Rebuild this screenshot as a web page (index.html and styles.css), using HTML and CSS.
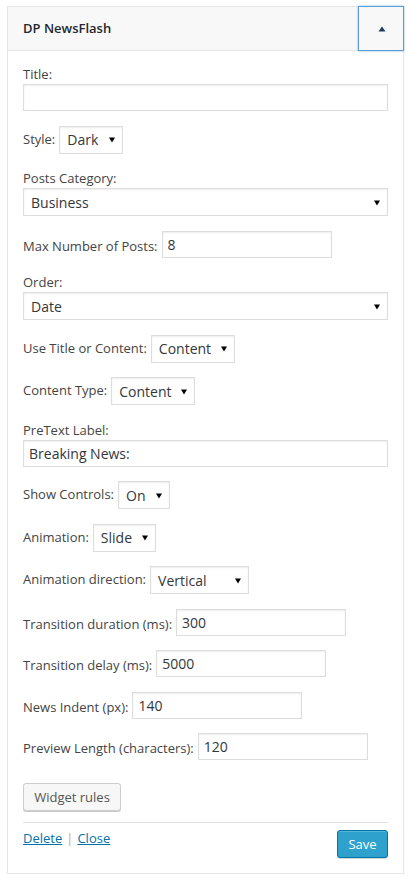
FILE: index.html
```html
<!DOCTYPE html>
<html lang="en">
<head>
<meta charset="utf-8">
<title>DP NewsFlash widget</title>
<link rel="stylesheet" href="styles.css">
</head>
<body>
<div class="widget">
  <div class="widget-top">
    <h3 class="widget-title">DP NewsFlash</h3>
    <button class="widget-toggle" type="button" aria-label="Collapse">
      <svg width="8" height="6" viewBox="0 0 8 6"><path d="M0.5 5.5 L4 0.5 L7.5 5.5 Z" fill="#1f3b55"/></svg>
    </button>
  </div>
  <div class="widget-inside">
    <div class="fields">
      <div class="field stack">
        <label>Title:</label>
        <input class="text wide" type="text" value="">
      </div>
      <div class="field row sel">
        <label>Style:</label>
        <span class="select w-dark">Dark<svg class="arrow" width="6" height="6" viewBox="0 0 6 6"><path d="M0 0.5 H6 L3 5.5 Z" fill="#000"/></svg></span>
      </div>
      <div class="field stack">
        <label>Posts Category:</label>
        <span class="select wide">Business<svg class="arrow" width="6" height="6" viewBox="0 0 6 6"><path d="M0 0.5 H6 L3 5.5 Z" fill="#000"/></svg></span>
      </div>
      <div class="field row inp">
        <label>Max Number of Posts:</label>
        <input class="text short" type="text" value="8">
      </div>
      <div class="field stack">
        <label>Order:</label>
        <span class="select wide">Date<svg class="arrow" width="6" height="6" viewBox="0 0 6 6"><path d="M0 0.5 H6 L3 5.5 Z" fill="#000"/></svg></span>
      </div>
      <div class="field row sel">
        <label>Use Title or Content:</label>
        <span class="select w-content">Content<svg class="arrow" width="6" height="6" viewBox="0 0 6 6"><path d="M0 0.5 H6 L3 5.5 Z" fill="#000"/></svg></span>
      </div>
      <div class="field row sel">
        <label>Content Type:</label>
        <span class="select w-content">Content<svg class="arrow" width="6" height="6" viewBox="0 0 6 6"><path d="M0 0.5 H6 L3 5.5 Z" fill="#000"/></svg></span>
      </div>
      <div class="field stack">
        <label>PreText Label:</label>
        <input class="text wide" type="text" value="Breaking News:">
      </div>
      <div class="field row sel">
        <label>Show Controls:</label>
        <span class="select w-on">On<svg class="arrow" width="6" height="6" viewBox="0 0 6 6"><path d="M0 0.5 H6 L3 5.5 Z" fill="#000"/></svg></span>
      </div>
      <div class="field row sel">
        <label>Animation:</label>
        <span class="select w-slide">Slide<svg class="arrow" width="6" height="6" viewBox="0 0 6 6"><path d="M0 0.5 H6 L3 5.5 Z" fill="#000"/></svg></span>
      </div>
      <div class="field row sel">
        <label>Animation direction:</label>
        <span class="select w-vertical">Vertical<svg class="arrow" width="6" height="6" viewBox="0 0 6 6"><path d="M0 0.5 H6 L3 5.5 Z" fill="#000"/></svg></span>
      </div>
      <div class="field row inp">
        <label>Transition duration (ms):</label>
        <input class="text short" type="text" value="300">
      </div>
      <div class="field row inp">
        <label>Transition delay (ms):</label>
        <input class="text short" type="text" value="5000">
      </div>
      <div class="field row inp">
        <label>News Indent (px):</label>
        <input class="text short" type="text" value="140">
      </div>
      <div class="field row inp">
        <label>Preview Length (characters):</label>
        <input class="text short" type="text" value="120">
      </div>
    </div>
    <div class="rules-wrap">
      <button class="btn btn-secondary" type="button">Widget rules</button>
    </div>
    <div class="widget-footer">
      <div class="links">
        <a href="#" class="link">Delete</a><span class="sep">|</span><a href="#" class="link">Close</a>
      </div>
      <button class="btn btn-primary" type="button">Save</button>
    </div>
  </div>
</div>
</body>
</html>
```
FILE: styles.css
```css
* {
  box-sizing: border-box;
}

html, body {
  margin: 0;
  padding: 0;
  background: #fff;
}

body {
  font-family: "Open Sans", "Liberation Sans", sans-serif;
  font-size: 13px;
  color: #444;
}

.widget {
  width: 397px;
  margin: 6px 6px 0 7px;
  border: 1px solid #e5e5e5;
  background: #fff;
  box-shadow: 0 1px 1px rgba(0, 0, 0, 0.04);
}

.widget-top {
  display: flex;
  align-items: stretch;
  height: 44px;
  background: #f8f8f8;
  border-bottom: 1px solid #e5e5e5;
}

.widget-title {
  flex: 1;
  margin: 0;
  padding: 0 15px;
  font-size: 13px;
  font-weight: 600;
  line-height: 43px;
  color: #23282d;
}

.widget-toggle {
  width: 46px;
  height: 45px;
  margin: -1px -1px -1px 0;
  padding: 0;
  display: flex;
  align-items: center;
  justify-content: center;
  background: #f8f8f8;
  border: 1px solid #5b9dd9;
  box-shadow: 0 0 2px rgba(30, 140, 190, 0.6);
  cursor: pointer;
}

.widget-toggle svg {
  display: block;
  margin-top: 1px;
  margin-left: 1px;
}

.widget-inside {
  padding: 13px 15px 15px;
}

.fields {
  display: flex;
  flex-direction: column;
  gap: 14.5px;
}

.field label {
  line-height: 20px;
  color: #444;
  white-space: nowrap;
}

.stack {
  display: flex;
  flex-direction: column;
  align-items: flex-start;
}

.stack label {
  display: block;
}

.row {
  display: flex;
  align-items: center;
  gap: 4px;
}

.row.sel label {
  padding-bottom: 2px;
}

.row.inp label {
  padding-top: 3px;
}

.text {
  height: 27px;
  margin: 0;
  padding: 0 5px;
  font-family: "Open Sans", "Liberation Sans", sans-serif;
  font-size: 14px;
  color: #32373c;
  background: #fff;
  border: 1px solid #ddd;
  border-radius: 0;
  box-shadow: inset 0 1px 2px rgba(0, 0, 0, 0.07);
  outline: none;
}

.wide {
  width: 365px;
}

.short {
  width: 170px;
}

.select {
  display: inline-flex;
  align-items: center;
  justify-content: space-between;
  height: 28px;
  padding: 0 7px 0 7px;
  font-size: 14px;
  color: #32373c;
  background: #fff;
  border: 1px solid #ddd;
  box-shadow: inset 0 1px 2px rgba(0, 0, 0, 0.07);
  white-space: nowrap;
}

.select .arrow {
  display: block;
  flex: none;
  margin-top: 1px;
}

.w-dark { width: 64px; }
.w-content { width: 84px; }
.w-on { width: 52px; }
.w-slide { width: 63px; }
.w-vertical { width: 99px; }

.rules-wrap {
  margin-top: 23px;
}

.btn {
  display: inline-flex;
  align-items: center;
  justify-content: center;
  height: 28px;
  padding: 0 10px;
  font-family: "Open Sans", "Liberation Sans", sans-serif;
  font-size: 13px;
  border-radius: 3px;
  cursor: pointer;
  white-space: nowrap;
}

.btn-secondary {
  width: 98px;
  color: #555;
  background: #f7f7f7;
  border: 1px solid #ccc;
  box-shadow: 0 1px 0 #ccc;
}

.btn-primary {
  width: 51px;
  margin-top: 2px;
  color: #fff;
  background: #2ea2cc;
  border: 1px solid #0074a2;
  box-shadow: inset 0 1px 0 rgba(120, 200, 230, 0.5), 0 1px 0 rgba(0, 0, 0, 0.15);
}

.widget-footer {
  display: flex;
  justify-content: space-between;
  align-items: flex-start;
  margin-top: 11px;
  padding-top: 5px;
  border-top: 1px solid #e1e1e1;
}

.links {
  line-height: 20px;
}

.link {
  color: #0073aa;
  text-decoration: underline;
}

.sep {
  margin: 0 4px;
  color: #c9a66f;
}
```
